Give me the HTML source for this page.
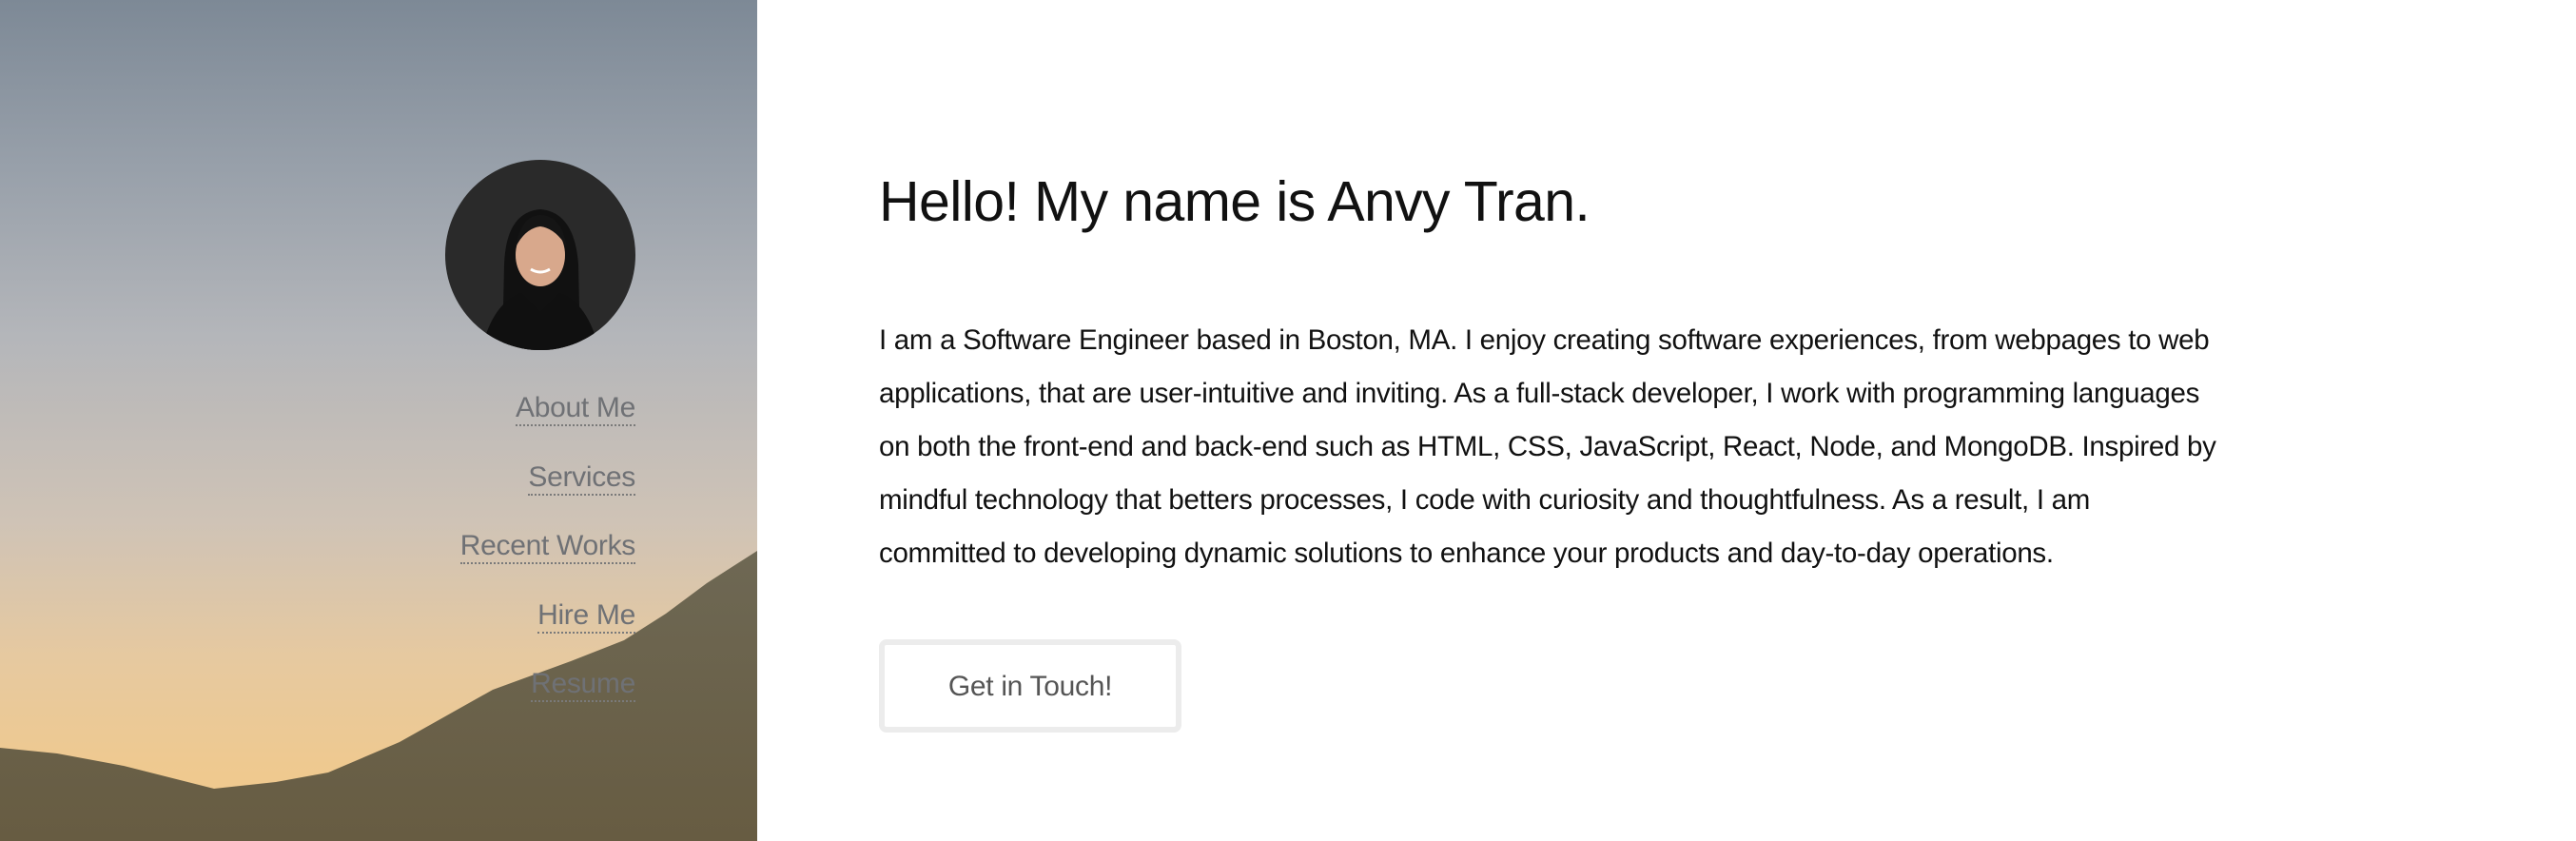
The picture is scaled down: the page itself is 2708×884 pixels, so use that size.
<!DOCTYPE html>
<html><head><meta charset="utf-8"><style>
html,body{margin:0;padding:0;width:2708px;height:884px;overflow:hidden;background:#fff;font-family:"Liberation Sans",sans-serif;}
#side{position:absolute;left:0;top:0;width:796px;height:884px;overflow:hidden;
background:linear-gradient(180deg,#7d8996 0%,#98a0aa 20%,#b4b6ba 40%,#cfc3b6 62%,#e6c9a0 78%,#efc98f 92%);}
#side svg{position:absolute;left:0;top:0}
#avatar{position:absolute;left:468px;top:168px;width:200px;height:200px;border-radius:50%;background:#2a2a2a;overflow:hidden}
nav{position:absolute;right:128px;top:0;text-align:right}
nav a{position:absolute;right:0;white-space:nowrap;color:#6f7175;font-size:30px;text-decoration:none;border-bottom:2px dotted #7a7a7a;line-height:34px;letter-spacing:-0.3px}
h1{position:absolute;left:924px;top:178px;margin:0;font-weight:normal;font-size:59px;color:#111;letter-spacing:-0.6px;white-space:nowrap}
p{position:absolute;left:924px;top:330px;margin:0;font-size:29.5px;line-height:56px;color:#111;white-space:nowrap;letter-spacing:-0.3px}
.btn{position:absolute;left:924px;top:672px;width:306px;height:86px;border:6px solid #ececec;border-radius:8px;font-size:30px;color:#555;text-align:center;line-height:88px;letter-spacing:-0.3px}
</style></head><body>
<div id="side">
<svg width="796" height="884" viewBox="0 0 796 884">
<defs><linearGradient id="m" x1="0" y1="0" x2="0" y2="1"><stop offset="0" stop-color="#6e6854"/><stop offset="1" stop-color="#675c42"/></linearGradient></defs>
<path d="M0 786 L60 792 L130 805 L225 829 L290 822 L345 812 L420 780 L518 725 L600 695 L656 673 L700 645 L743 613 L796 579 L796 884 L0 884Z" fill="url(#m)"/>
</svg>
<div id="avatar">
<svg width="200" height="200" viewBox="0 0 200 200">
<path d="M60 200 L62 110 Q64 55 100 52 Q136 55 140 110 L142 200Z" fill="#111"/>
<ellipse cx="100" cy="100" rx="26" ry="33" fill="#d8a88c"/>
<path d="M74 92 Q80 58 100 58 Q122 58 128 92 Q116 72 100 70 Q84 72 74 92Z" fill="#151515"/>
<path d="M38 200 Q50 150 80 140 L100 160 L120 140 Q150 150 162 200Z" fill="#101010"/>
<path d="M90 115 Q100 121 110 115" stroke="#fff" stroke-width="3" fill="none"/>
</svg>
</div>
<nav>
<a style="top:412px">About Me</a>
<a style="top:485px">Services</a>
<a style="top:557px">Recent Works</a>
<a style="top:630px">Hire Me</a>
<a style="top:702px">Resume</a>
</nav>
</div>
<h1>Hello! My name is Anvy Tran.</h1>
<p>I am a Software Engineer based in Boston, MA. I enjoy creating software experiences, from webpages to web<br>applications, that are user-intuitive and inviting. As a full-stack developer, I work with programming languages<br>on both the front-end and back-end such as HTML, CSS, JavaScript, React, Node, and MongoDB. Inspired by<br>mindful technology that betters processes, I code with curiosity and thoughtfulness. As a result, I am<br>committed to developing dynamic solutions to enhance your products and day-to-day operations.</p>
<div class="btn">Get in Touch!</div>
</body></html>
